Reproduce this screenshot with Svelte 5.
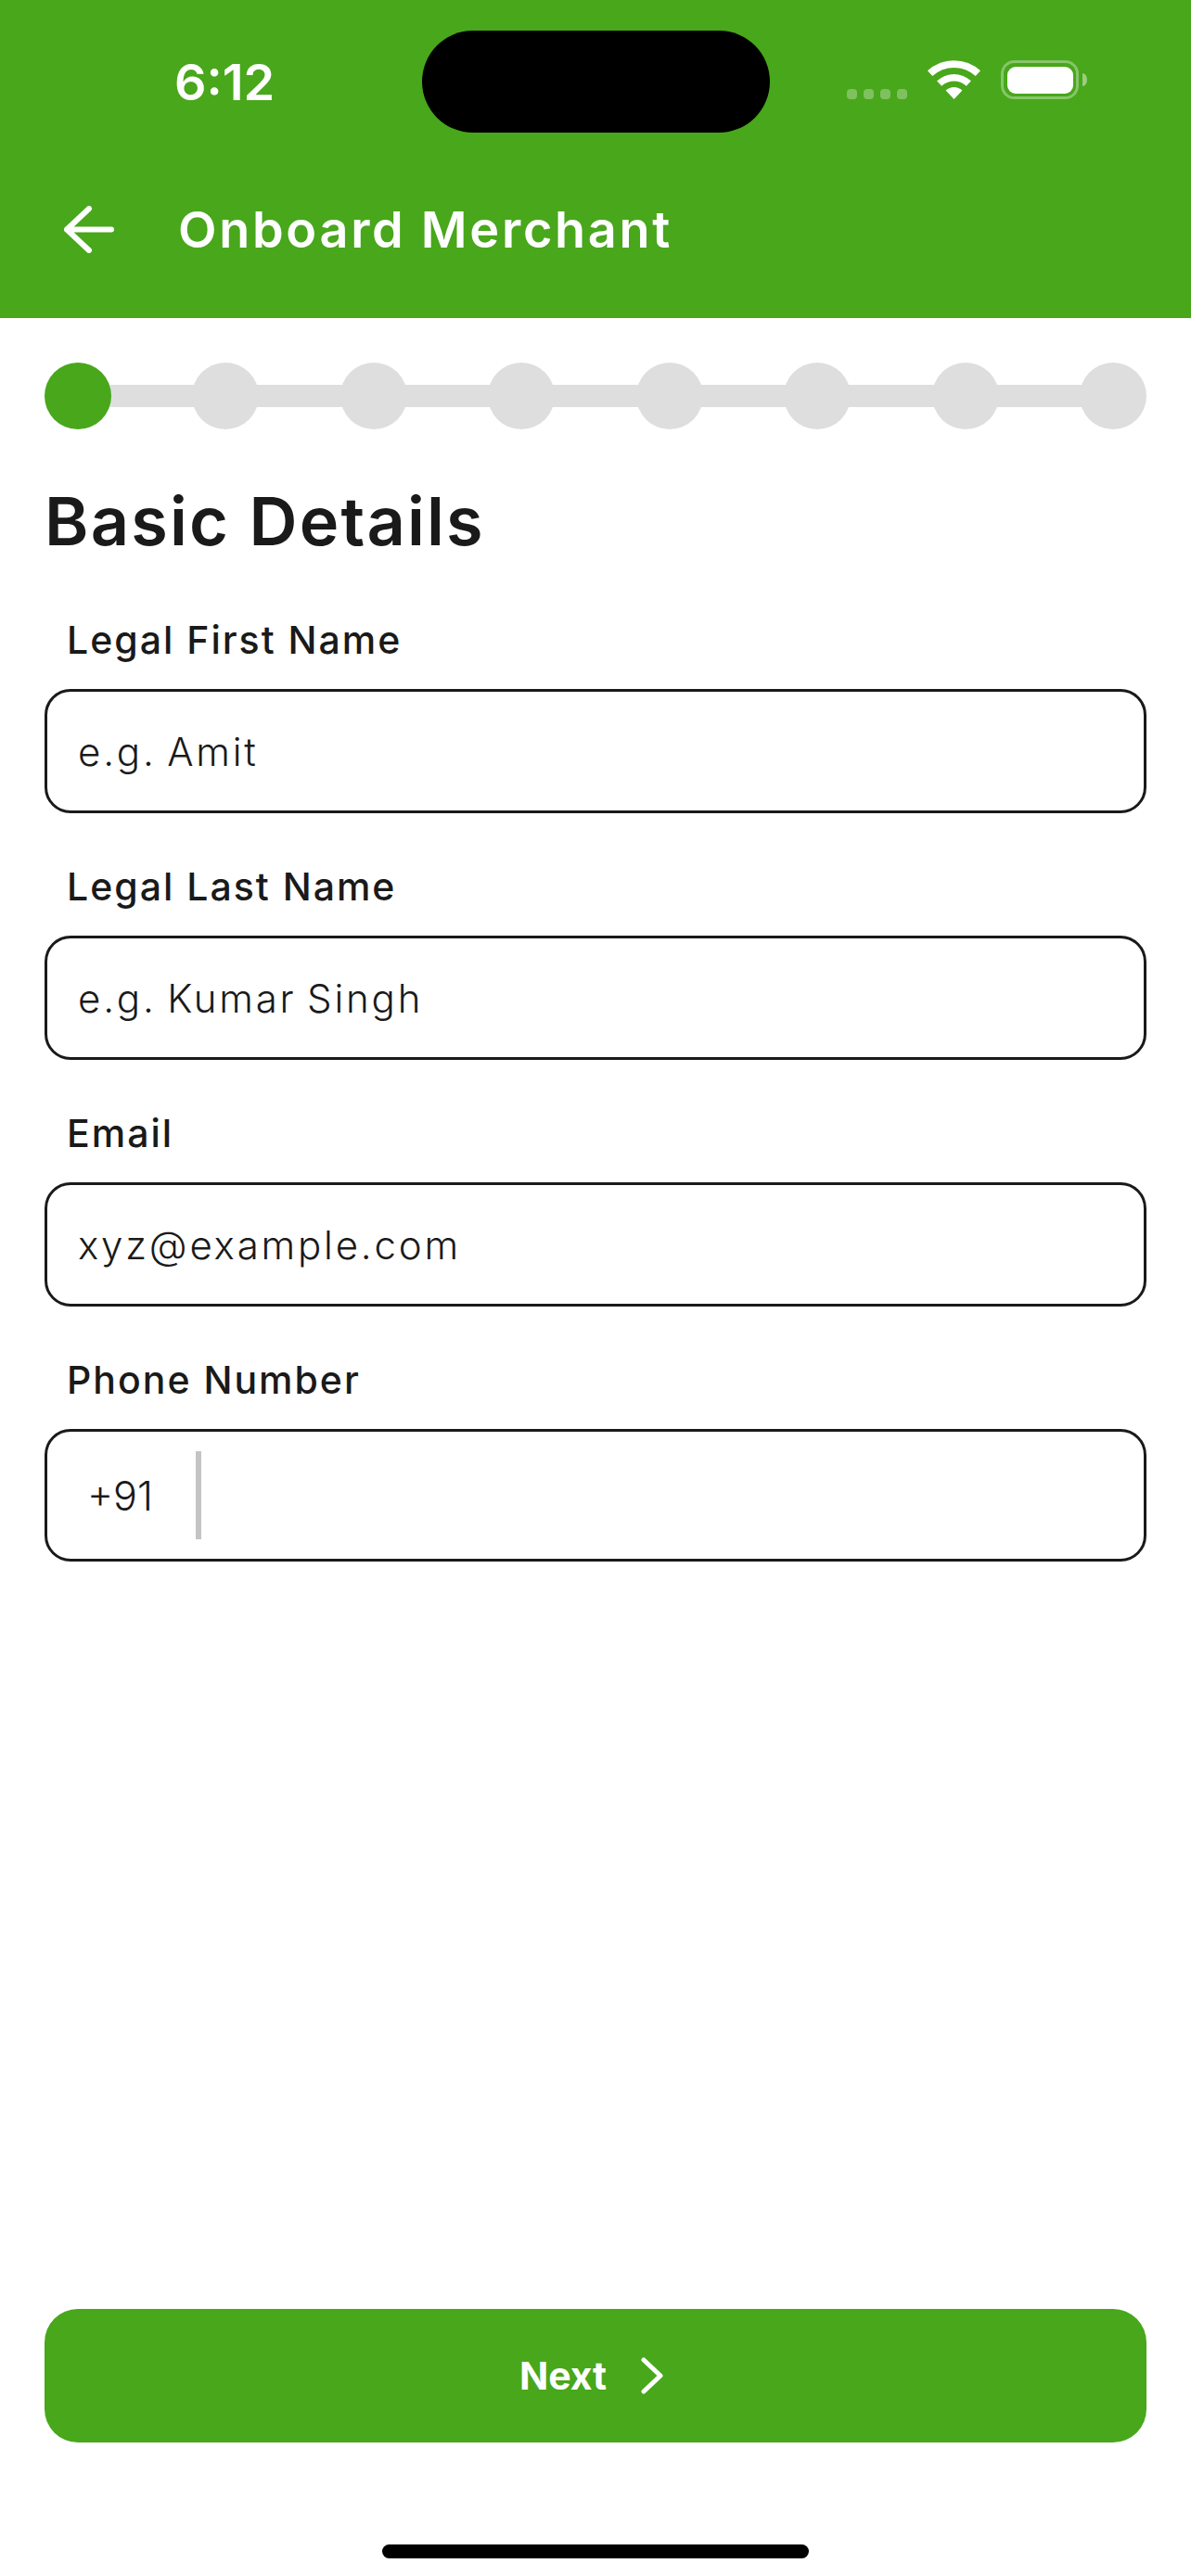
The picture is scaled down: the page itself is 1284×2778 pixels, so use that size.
<script>
  const STEPS = [1, 2, 3, 4, 5, 6, 7, 8]
  const FIELDS = [
    { label: 'Legal First Name', hint: 'e.g. Amit' },
    { label: 'Legal Last Name', hint: 'e.g. Kumar Singh' },
    { label: 'Email', hint: 'xyz@example.com' },
  ]
  let step = 1
</script>

<div class="page">
  <header class="header">
    <div class="status">
      <div class="status-left"><span class="time">6:12</span></div>
      <div class="island"></div>
      <div class="status-right">
        <svg class="dots" width="65" height="11" viewBox="0 0 65 11">
          {#each [0, 18, 36, 54] as x}
            <rect {x} width="11" height="11" rx="4" fill="#fff" opacity="0.3" />
          {/each}
        </svg>
        <svg width="57" height="42" viewBox="0 0 57 42" fill="#fff">
          <path d="M0 11.3A42 42 0 0 1 57 11.3L51.7 17.1A34 34 0 0 0 5.3 17.1Z" />
          <path d="M10.1 22.3A27 27 0 0 1 46.9 22.3L41.8 27.7A19.5 19.5 0 0 0 15.2 27.7Z" />
          <path d="M19.6 32.5A13 13 0 0 1 37.4 32.5L28.5 42Z" />
        </svg>
        <svg class="battery" width="93" height="42" viewBox="0 0 93 42" fill="#fff">
          <rect x="1.5" y="1.5" width="81" height="39" rx="13" fill="none" stroke="#fff" stroke-width="3" opacity="0.35" />
          <rect x="7" y="7" width="71" height="29" rx="9" />
          <path d="M88 14a5 7 0 0 1 5 7a5 7 0 0 1-5 7Z" opacity="0.45" />
        </svg>
      </div>
    </div>
    <div class="titlebar">
      <svg width="54" height="51" viewBox="0 0 54 51" fill="none" stroke="#fff" stroke-width="6" stroke-linecap="round" stroke-linejoin="round">
        <path d="M27 3L3 25.5L27 48M3 25.5H51" />
      </svg>
      <h1>Onboard Merchant</h1>
    </div>
  </header>

  <main class="content">
    <div class="stepper">
      {#each STEPS as s}
        <span class="dot" class:active={s === step}></span>
      {/each}
    </div>

    <h2>Basic Details</h2>

    {#each FIELDS as field}
      <div class="field">
        <div class="label">{field.label}</div>
        <div class="box"><span class="hint">{field.hint}</span></div>
      </div>
    {/each}

    <div class="field">
      <div class="label">Phone Number</div>
      <div class="box phone">
        <span class="code">+91</span>
        <span class="divider"></span>
      </div>
    </div>

    <button class="next">
      <span>Next</span>
      <svg width="26" height="40" viewBox="0 0 26 40" fill="none" stroke="#fff" stroke-width="5" stroke-linecap="round" stroke-linejoin="round">
        <path d="M4 3L22 20L4 37" />
      </svg>
    </button>
  </main>

  <div class="home"></div>
</div>

<style>
  :global(body) {
    margin: 0;
    background: #fff;
  }
  .page {
    width: 1284px;
    height: 2778px;
    display: flex;
    flex-direction: column;
    font-family: Inter, "Liberation Sans", sans-serif;
    color: #1a1a1a;
  }
  .header {
    height: 343px;
    background: #48a71b;
    color: #fff;
    padding-top: 33px;
    box-sizing: border-box;
  }
  .status {
    display: flex;
    height: 110px;
  }
  .status-left {
    width: 455px;
    padding-left: 188px;
    box-sizing: border-box;
    display: flex;
    align-items: center;
  }
  .time {
    font-size: 54px;
    font-weight: 600;
  }
  .island {
    width: 375px;
    height: 110px;
    background: #000;
    border-radius: 55px;
  }
  .status-right {
    display: flex;
    align-items: flex-start;
    gap: 22px;
    padding: 32px 0 0 83px;
  }
  .dots {
    margin-top: 31px;
  }
  .titlebar {
    display: flex;
    align-items: center;
    height: 80px;
    margin-top: 64px;
    padding-left: 69px;
  }
  h1 {
    margin: 0 0 0 69px;
    font-size: 54px;
    font-weight: 600;
    letter-spacing: 2.7px;
  }
  .content {
    flex: 1;
    display: flex;
    flex-direction: column;
    padding: 48px 48px 0;
  }
  .stepper {
    display: flex;
    justify-content: space-between;
    background: linear-gradient(#dedede, #dedede) center / calc(100% - 72px) 24px no-repeat;
  }
  .dot {
    width: 72px;
    height: 72px;
    border-radius: 50%;
    background: #dedede;
  }
  .dot.active {
    background: #48a71b;
  }
  h2 {
    margin: 54px 0 53px;
    font-size: 72px;
    line-height: 90px;
    font-weight: 600;
    letter-spacing: 2.2px;
  }
  .field {
    margin-bottom: 49px;
  }
  .label {
    padding-left: 24px;
    margin-bottom: 23px;
    font-size: 41px;
    line-height: 60px;
    font-weight: 500;
    letter-spacing: 2px;
  }
  .box {
    height: 134px;
    box-sizing: border-box;
    border: 3px solid #1a1a1a;
    border-radius: 28px;
    display: flex;
    align-items: center;
    padding-left: 33px;
  }
  .hint {
    font-size: 42px;
    font-weight: 300;
    letter-spacing: 2.8px;
    word-spacing: -3px;
  }
  .phone {
    height: 143px;
    padding-left: 43px;
  }
  .code {
    font-size: 43px;
    font-weight: 300;
  }
  .divider {
    width: 6px;
    height: 95px;
    margin-left: 46px;
    background: #c4c4c4;
  }
  .next {
    margin-top: auto;
    height: 144px;
    border: none;
    border-radius: 36px;
    background: #48a71b;
    color: #fff;
    font-family: inherit;
    font-size: 41px;
    font-weight: 700;
    display: flex;
    align-items: center;
    justify-content: center;
    gap: 36px;
    padding: 0 8px 0 0;
  }
  .home {
    width: 460px;
    height: 15px;
    margin: 110px auto 19px;
    border-radius: 8px;
    background: #000;
  }
</style>
